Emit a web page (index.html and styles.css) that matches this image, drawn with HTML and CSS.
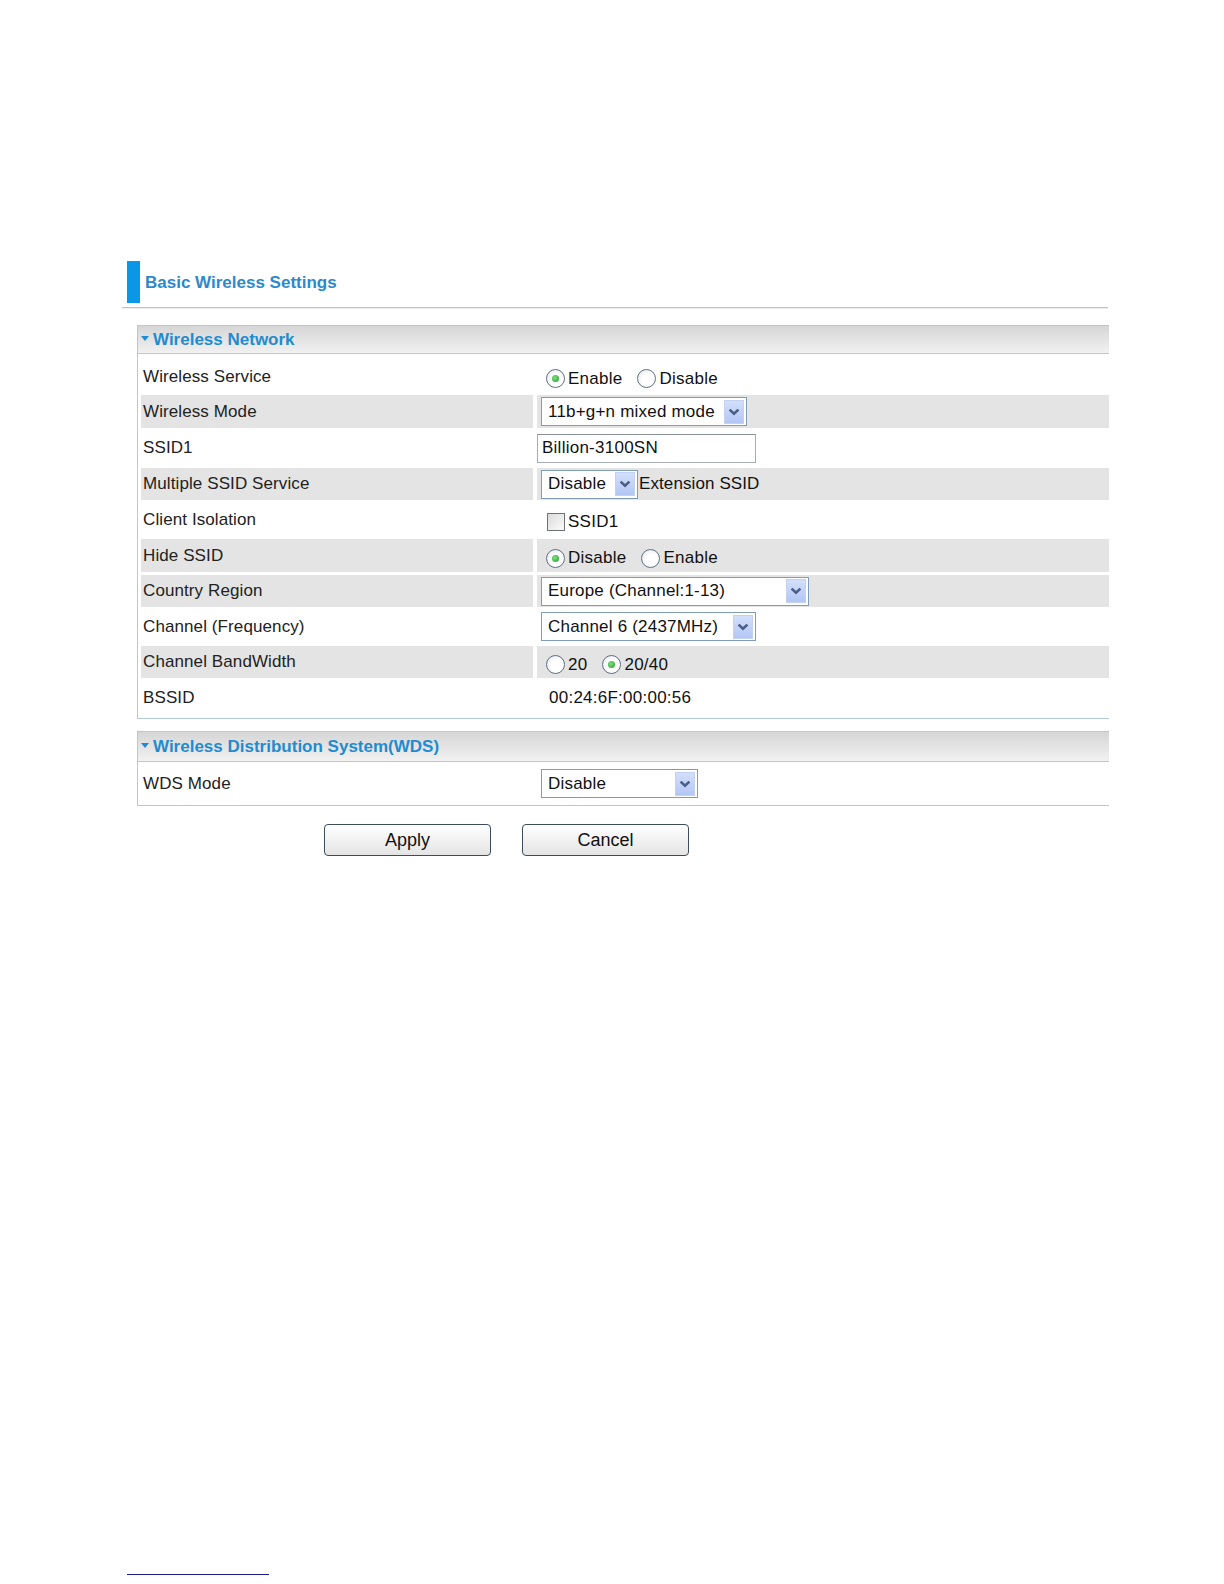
FILE: index.html
```html
<!DOCTYPE html>
<html>
  <head>
    <link rel="stylesheet" href="styles.css">
  </head>
  <body>
    <div class="page-title">
      <span class="title-bar"></span>
      <span class="title-text">Basic Wireless Settings</span>
    </div>
    <div class="title-rule"></div>

    <div class="section">
      <div class="section-head"><span class="arrow-down"></span>Wireless Network</div>
      <div class="form-grid">
        <div class="label row-tall">Wireless Service</div>
        <div class="value row-tall radio-row">
          <span class="radio checked"></span><span class="opt">Enable</span>
          <span class="radio"></span><span class="opt">Disable</span>
        </div>

        <div class="label shade row-33">Wireless Mode</div>
        <div class="value shade row-33">
          <div class="select w-mode"><span class="select-text">11b+g+n mixed mode</span><span class="select-btn"><svg width="12" height="8" viewBox="0 0 12 8"><path d="M1.6 1.6 L6 5.8 L10.4 1.6" fill="none" stroke="#4a5e88" stroke-width="2.6"/></svg></span></div>
        </div>

        <div class="label row-mid">SSID1</div>
        <div class="value row-mid">
          <div class="text-input">Billion-3100SN</div>
        </div>

        <div class="label shade">Multiple SSID Service</div>
        <div class="value shade">
          <div class="select w-multi"><span class="select-text">Disable</span><span class="select-btn"><svg width="12" height="8" viewBox="0 0 12 8"><path d="M1.6 1.6 L6 5.8 L10.4 1.6" fill="none" stroke="#4a5e88" stroke-width="2.6"/></svg></span></div>
          <span class="after-select">Extension SSID</span>
        </div>

        <div class="label row-33">Client Isolation</div>
        <div class="value row-33 radio-row">
          <span class="checkbox"></span><span class="opt">SSID1</span>
        </div>

        <div class="label shade row-33">Hide SSID</div>
        <div class="value shade row-33 radio-row">
          <span class="radio checked"></span><span class="opt">Disable</span>
          <span class="radio"></span><span class="opt">Enable</span>
        </div>

        <div class="label shade">Country Region</div>
        <div class="value shade">
          <div class="select w-country"><span class="select-text">Europe (Channel:1-13)</span><span class="select-btn"><svg width="12" height="8" viewBox="0 0 12 8"><path d="M1.6 1.6 L6 5.8 L10.4 1.6" fill="none" stroke="#4a5e88" stroke-width="2.6"/></svg></span></div>
        </div>

        <div class="label row-33">Channel (Frequency)</div>
        <div class="value row-33">
          <div class="select w-channel"><span class="select-text">Channel 6 (2437MHz)</span><span class="select-btn"><svg width="12" height="8" viewBox="0 0 12 8"><path d="M1.6 1.6 L6 5.8 L10.4 1.6" fill="none" stroke="#4a5e88" stroke-width="2.6"/></svg></span></div>
        </div>

        <div class="label shade">Channel BandWidth</div>
        <div class="value shade radio-row">
          <span class="radio"></span><span class="opt short">20</span>
          <span class="radio checked"></span><span class="opt">20/40</span>
        </div>

        <div class="label row-mid">BSSID</div>
        <div class="value row-mid plain">00:24:6F:00:00:56</div>
      </div>
    </div>

    <div class="section section-wds">
      <div class="section-head"><span class="arrow-down"></span>Wireless Distribution System(WDS)</div>
      <div class="form-grid">
        <div class="label row-wds">WDS Mode</div>
        <div class="value row-wds">
          <div class="select w-wds"><span class="select-text">Disable</span><span class="select-btn"><svg width="12" height="8" viewBox="0 0 12 8"><path d="M1.6 1.6 L6 5.8 L10.4 1.6" fill="none" stroke="#4a5e88" stroke-width="2.6"/></svg></span></div>
        </div>
      </div>
    </div>

    <div class="buttons">
      <button class="btn">Apply</button>
      <button class="btn">Cancel</button>
    </div>

    <div class="footnote-rule"></div>
  </body>
</html>
```

FILE: styles.css
```css
/* router web ui - basic wireless page */
body {
  margin: 0;
  background: #ffffff;
  font-family: "Liberation Sans", Arial, sans-serif;
  color: #1a1a1a;
}

.page-title {
  display: flex;
  align-items: center;
  margin: 261px 0 0 127px;
  height: 42px;
}

.title-bar {
  width: 13px;
  height: 42px;
  background: #0c97e6;
}

.title-text {
  margin-left: 5px;
  padding-top: 1px;
  font-size: 17px;
  font-weight: bold;
  color: #2b89cc;
}

.title-rule {
  margin: 4px 0 0 122px;
  width: 986px;
  border-top: 1px solid #c4c4c4;
  border-bottom: 1px solid #ececec;
}

.section {
  margin: 16px 0 0 137px;
  width: 971px;
  border: 1px solid #b3c9e3;
  border-right: none;
}

.section-wds {
  margin-top: 12px;
}

.section-head {
  height: 27px;
  display: flex;
  align-items: center;
  padding-left: 3px;
  border-bottom: 1px solid #b3c9e3;
  background: linear-gradient(#d7d6d6, #f1f1f1);
  font-size: 17px;
  font-weight: bold;
  color: #1f8bd0;
}

.section-wds .section-head {
  height: 29px;
}

.arrow-down {
  width: 0;
  height: 0;
  margin-right: 4px;
  margin-top: -3px;
  border-left: 4.5px solid transparent;
  border-right: 4.5px solid transparent;
  border-top: 5px solid #1f8bd0;
}

.form-grid {
  display: grid;
  grid-template-columns: 392px 1fr;
  column-gap: 4px;
  row-gap: 3px;
  padding: 3px 0 3px 3px;
}

.label,
.value {
  height: 32px;
  display: flex;
  align-items: center;
  font-size: 17px;
  letter-spacing: 0.1px;
}

.label {
  padding-left: 2px;
  color: #222222;
}

.value {
  color: #111111;
  letter-spacing: 0.25px;
}

.row-33 {
  height: 33px;
}

.row-tall {
  height: 35px;
  padding-top: 4px;
  box-sizing: border-box;
}

.row-mid {
  height: 34px;
}

.row-wds {
  height: 37px;
}

.shade {
  background: #e4e4e4;
}

.radio-row {
  padding-top: 5px;
  box-sizing: border-box;
}

.row-tall.radio-row {
  padding-top: 8px;
}

.radio {
  width: 17px;
  height: 17px;
  margin-left: 9px;
  border: 1px solid #5f7184;
  border-radius: 50%;
  background: radial-gradient(circle at 60% 60%, #ffffff 40%, #dfe3e8 100%);
  position: relative;
  flex: none;
}

.radio + .opt + .radio {
  margin-left: 15px;
}

.radio.checked::after {
  content: "";
  position: absolute;
  left: 5px;
  top: 5px;
  width: 7px;
  height: 7px;
  border-radius: 50%;
  background: radial-gradient(circle at 40% 40%, #7fe07f, #1e9e2a);
}

.opt {
  margin-left: 3px;
}

.checkbox {
  width: 16px;
  height: 16px;
  margin-left: 10px;
  border: 1px solid #6f7275;
  background: linear-gradient(135deg, #dcdcdc, #fafafa);
  flex: none;
}

.select {
  height: 27px;
  margin-left: 4px;
  border: 1px solid #7f9db9;
  background: #ffffff;
  display: flex;
  align-items: center;
  justify-content: space-between;
  box-sizing: content-box;
  letter-spacing: 0.2px;
}

.select-text {
  padding-left: 6px;
  white-space: nowrap;
}

.select-btn {
  width: 20px;
  height: 24px;
  margin-right: 2px;
  display: flex;
  align-items: center;
  justify-content: center;
  background: linear-gradient(#d3dffb, #b3c7f5);
  border: 1px solid #c3d2f2;
  box-sizing: border-box;
}

.w-mode { width: 204px; }
.w-multi { width: 95px; }
.w-country { width: 266px; }
.w-channel { width: 213px; }
.w-wds { width: 155px; }

.after-select {
  margin-left: 1px;
  letter-spacing: 0.1px;
}

.text-input {
  width: 213px;
  height: 27px;
  padding-left: 4px;
  display: flex;
  align-items: center;
  border: 1px solid #a7adb4;
  border-top-color: #8a9097;
  background: #ffffff;
}

.plain {
  padding-left: 12px;
  padding-top: 0;
  box-sizing: border-box;
}

.buttons {
  display: flex;
  gap: 31px;
  margin: 18px 0 0 324px;
}

.btn {
  width: 167px;
  height: 32px;
  border: 1px solid #3e4b5b;
  border-radius: 4px;
  background: linear-gradient(#ffffff, #e4e4e4);
  font-family: "Liberation Sans", Arial, sans-serif;
  font-size: 18px;
  color: #111111;
  padding: 0;
}

.footnote-rule {
  margin: 718px 0 0 127px;
  width: 142px;
  border-top: 1px solid #1c1c8a;
}
```
